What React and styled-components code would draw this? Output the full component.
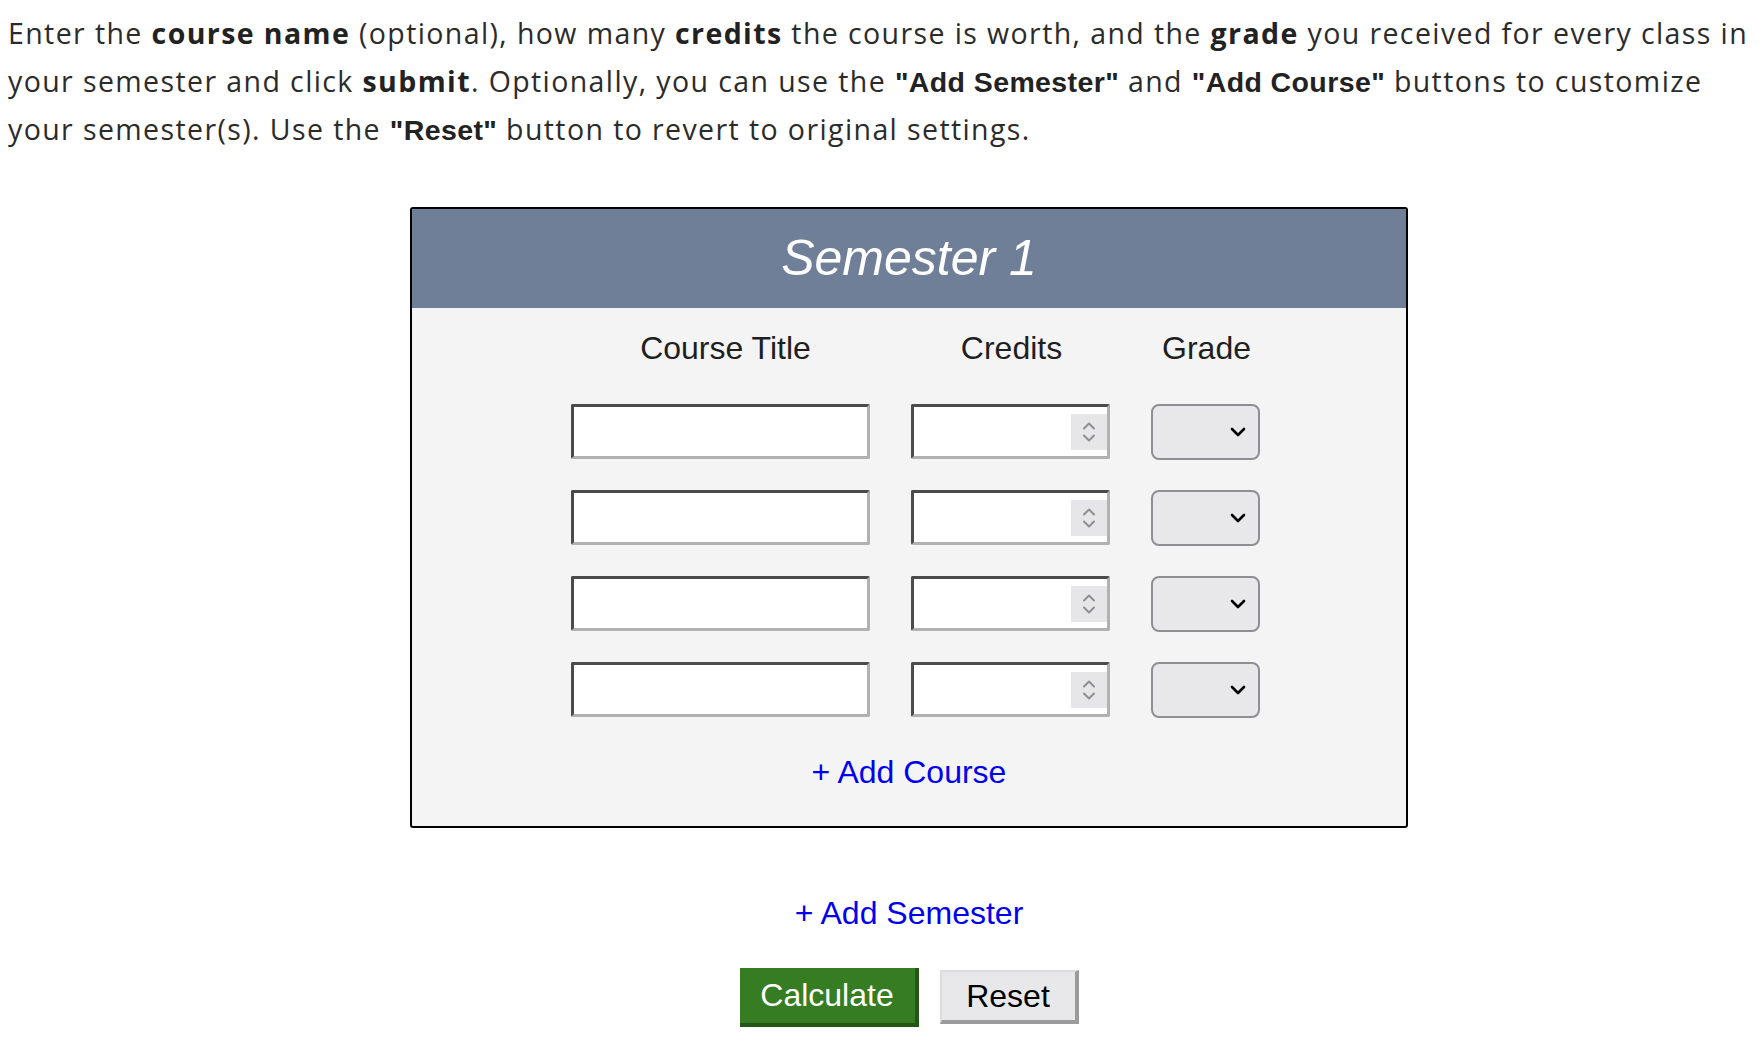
import React from "react";
import styled, { createGlobalStyle } from "styled-components";

const GlobalStyle = createGlobalStyle`
  body {
    margin: 8px;
    background: #ffffff;
    font-family: "Liberation Sans", Arial, sans-serif;
  }
`;

const Intro = styled.p`
  margin: 2px 0 0;
  font-family: "Open Sans", Lato, sans-serif;
  font-size: 28.5px;
  line-height: 47.5px;
  letter-spacing: 1.4px;
  color: #2b2b2b;

  b {
    font-weight: 700;
    color: #222;
  }
`;

const Quote = styled.b`
  font-family: "Liberation Sans", Arial, sans-serif;
  letter-spacing: 0.4px;
`;

const Main = styled.div`
  width: 998px;
  margin: 52px 0 0 402px;
  display: flex;
  flex-direction: column;
  align-items: center;
`;

const Card = styled.section`
  width: 100%;
  box-sizing: border-box;
  border: 2px solid #000;
  border-radius: 3px;
  background: #f4f4f4;
  overflow: hidden;
`;

const CardHeader = styled.h2`
  margin: 0;
  height: 99px;
  display: flex;
  align-items: center;
  justify-content: center;
  background: #6f7f97;
  color: #fff;
  font-size: 50px;
  font-style: italic;
  font-weight: 400;
`;

const CardBody = styled.div`
  padding: 22px 0 35px;
  display: flex;
  flex-direction: column;
  align-items: center;
`;

const Grid = styled.div`
  margin-left: 13px;
  display: grid;
  grid-template-columns: 299px 199px 109px;
  column-gap: 41px;
  row-gap: 30px;
  align-items: start;
`;

const ColLabel = styled.div`
  font-size: 32px;
  line-height: 37px;
  color: #1f1f1f;
  text-align: center;
  margin: 0 0 7px ${(p) => p.$shift || 0}px;
`;

const TextInput = styled.input`
  box-sizing: border-box;
  width: 100%;
  height: 55px;
  margin: 0;
  border: 3px solid;
  border-color: #4b4b4b #b1b1b1 #b1b1b1 #4b4b4b;
  border-radius: 2px;
  background: #fff;
  font: inherit;
  font-size: 28px;
  padding: 0 8px;
  outline: none;
`;

const NumberBox = styled.div`
  box-sizing: border-box;
  height: 55px;
  display: flex;
  align-items: center;
  border: 3px solid;
  border-color: #4b4b4b #b1b1b1 #b1b1b1 #4b4b4b;
  border-radius: 2px;
  background: #fff;

  input {
    flex: 1;
    min-width: 0;
    border: 0;
    outline: none;
    background: transparent;
    font: inherit;
    font-size: 28px;
    padding: 0 8px;
  }
`;

const Spinner = styled.div`
  width: 36px;
  height: 36px;
  margin-top: 1px;
  background: #e6e6e9;
  display: flex;
  flex-direction: column;
  align-items: center;
  justify-content: center;
  gap: 4px;
`;

const SelectBox = styled.div`
  box-sizing: border-box;
  height: 56px;
  border: 2px solid #8f8e97;
  border-radius: 8px;
  background: #e8e8ea;
  display: flex;
  align-items: center;
  justify-content: flex-end;
  padding-right: 12px;
  cursor: default;
`;

const LinkButton = styled.a`
  font-size: 32px;
  line-height: 37px;
  color: #0000ee;
  text-decoration: none;
  cursor: pointer;
  margin-top: ${(p) => p.$top || 0}px;
`;

const Actions = styled.div`
  display: flex;
  align-items: center;
  gap: 21px;
  margin-top: 36px;
`;

const Button = styled.button`
  box-sizing: border-box;
  font-family: "Liberation Sans", Arial, sans-serif;
  font-size: 32px;
  padding: 0;
  cursor: pointer;
  border-style: solid;
  ${(p) =>
    p.$primary
      ? `
    width: 179px;
    height: 59px;
    background: #367c22;
    color: #fff;
    border-width: 0 4px 4px 0;
    border-color: #245617;
  `
      : `
    width: 139px;
    height: 54px;
    background: #e8e8ea;
    color: #000;
    border-width: 2px 4px 4px 2px;
    border-color: #dcdcde #9b9b9b #9b9b9b #dcdcde;
  `}
`;

const Chevron = ({ up }) => (
  <svg width="14" height="9" viewBox="0 0 14 9">
    <path
      d={up ? "M2 7.5 L7 2.5 L12 7.5" : "M2 1.5 L7 6.5 L12 1.5"}
      fill="none"
      stroke="#8e8e93"
      strokeWidth="2"
      strokeLinecap="round"
      strokeLinejoin="round"
    />
  </svg>
);

const SelectArrow = () => (
  <svg width="16" height="10" viewBox="0 0 16 10">
    <path
      d="M2 2 L8 8 L14 2"
      fill="none"
      stroke="#000"
      strokeWidth="2.6"
      strokeLinecap="round"
      strokeLinejoin="round"
    />
  </svg>
);

const rows = [0, 1, 2, 3];

function App() {
  return (
    <>
      <GlobalStyle />
      <Intro>
        Enter the <b>course name</b> (optional), how many <b>credits</b> the
        course is worth, and the <b>grade</b> you received for every class in
        your semester and click <b>submit</b>. Optionally, you can use the{" "}
        <Quote>"Add Semester"</Quote> and <Quote>"Add Course"</Quote> buttons
        to customize your semester(s). Use the <Quote>"Reset"</Quote> button to
        revert to original settings.
      </Intro>

      <Main>
        <Card>
          <CardHeader>Semester 1</CardHeader>
          <CardBody>
            <Grid>
              <ColLabel $shift={10}>Course Title</ColLabel>
              <ColLabel $shift={2}>Credits</ColLabel>
              <ColLabel $shift={2}>Grade</ColLabel>
              {rows.map((r) => (
                <React.Fragment key={r}>
                  <TextInput type="text" />
                  <NumberBox>
                    <input type="text" inputMode="numeric" />
                    <Spinner>
                      <Chevron up />
                      <Chevron />
                    </Spinner>
                  </NumberBox>
                  <SelectBox>
                    <SelectArrow />
                  </SelectBox>
                </React.Fragment>
              ))}
            </Grid>
            <LinkButton $top={36}>+ Add Course</LinkButton>
          </CardBody>
        </Card>

        <LinkButton $top={67}>+ Add Semester</LinkButton>

        <Actions>
          <Button $primary>Calculate</Button>
          <Button>Reset</Button>
        </Actions>
      </Main>
    </>
  );
}

export default App;
